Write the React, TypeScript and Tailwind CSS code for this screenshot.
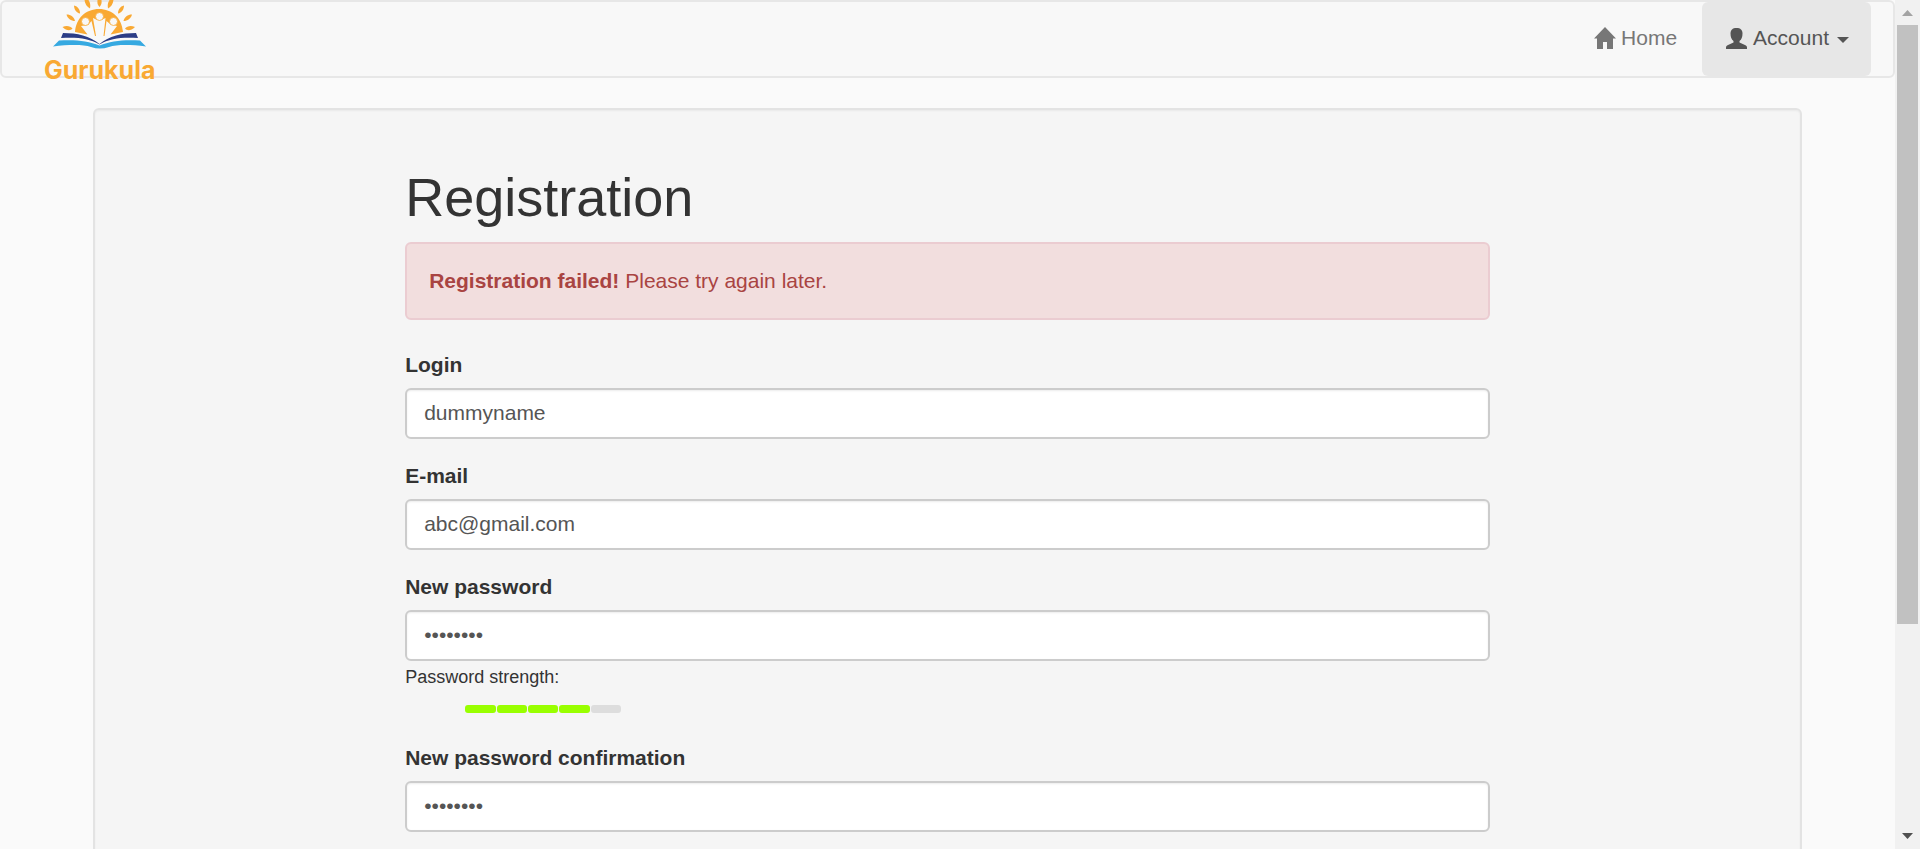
import React, { useState } from "react";

const inputClass =
  "block h-[51px] w-full rounded-md border-2 border-[#ccc] bg-white px-[17px] pb-0.5 text-[21px] leading-[30px] text-[#555] shadow-[inset_0_1px_2px_rgba(0,0,0,0.075)] outline-none focus:border-[#66afe9]";

function Field({
  id,
  label,
  type,
  initial,
  children,
}: {
  id: string;
  label: string;
  type: string;
  initial: string;
  children?: React.ReactNode;
}) {
  const [value, setValue] = useState(initial);
  return (
    <div className="mb-[22px]">
      <label htmlFor={id} className="mb-2 block text-[21px] leading-[30px] font-bold">
        {label}
      </label>
      <input
        id={id}
        type={type}
        value={value}
        onChange={(e) => setValue(e.target.value)}
        className={inputClass}
      />
      {children}
    </div>
  );
}

function PasswordStrength() {
  return (
    <div className="h-[60px] pt-0.5">
      <div className="text-[18px] leading-7">Password strength:</div>
      <div className="mt-[14px] ml-[60px] grid w-[156px] grid-cols-5 gap-px">
        <span className="h-2 rounded-[3px] bg-[#9f0]" />
        <span className="h-2 rounded-[3px] bg-[#9f0]" />
        <span className="h-2 rounded-[3px] bg-[#9f0]" />
        <span className="h-2 rounded-[3px] bg-[#9f0]" />
        <span className="h-2 rounded-[3px] bg-[#ddd]" />
      </div>
    </div>
  );
}

function LogoMark() {
  return (
    <svg viewBox="52 0 94 50" className="h-[50px] w-[94px] shrink-0" aria-hidden="true">
      <g fill="#f9a933">
        <path d="M74 32C75 18 85 9 98 9s23 9 24 23l-12.500 2.500L116 26l-7-2-3.500-3-2 15h-1l2-18Q98 22 92 18l3 18h-1l-3.500-15-3.500 4-7 1 6.500 8.500z" />
        <path d="M61.500 27c4-2 8-1 10 1.500-2 2.500-6 2.500-10-1.500z" />
        <path d="M65.500 14.500c4.500 0 7.500 2.500 8.500 6.500-4 0-7.500-2.500-8.500-6.500z" />
        <path d="M73 5.500c4 1 6 4 6 8-3.500-.5-6-4-6-8z" />
        <path d="M83.500 0h4c2 3 2 5.500 1.500 8.500-3-1.500-5-4.500-5.500-8.500z" />
        <path d="M96.500 0h4c.5 3-.3 5-2 7-1.800-2-2.500-4-2-7z" />
        <path d="M108.500 0h4c-.5 4-2.500 7-5.500 8.500-.5-3-.5-5.500 1.500-8.500z" />
        <path d="M123 5.500c0 4-2.500 7.500-6 8 0-4 2-7 6-8z" />
        <path d="M131 14.500c-1 4-4.500 6.500-8.500 6.500 1-4 4-6.500 8.500-6.500z" />
        <path d="M134 27c-4 4-8 4-10 1.500 2-2.500 6-3.500 10-1.500z" />
      </g>
      <g fill="#f8f8f8" stroke="#f9a933" strokeWidth="0.800">
        <circle cx="84.500" cy="21.500" r="4" />
        <circle cx="98.500" cy="16.500" r="4" />
        <circle cx="112.500" cy="21.500" r="4" />
      </g>
      <path d="M62 33c14 0 27 3 36.500 11C108 36 121 33 135 33l2 5c-15-1-28 0-38.500 6.500C88 38 75 37 60 38z" fill="#2b3c86" />
      <path d="M58 40.500c15-1 29 0 40.500 5 11.500-5 25.500-6 40.500-5l6 6c-16-2-29-2-37 .5-6 2-12 2-18 0-8-2.500-21-2.500-38-.5z" fill="#36a9e1" />
    </svg>
  );
}

function HomeIcon() {
  return (
    <svg viewBox="0 0 22 22" className="h-[22px] w-[22px]" fill="currentColor" aria-hidden="true">
      <path d="M11 0l11 11.500h-3V22h-6v-7H9v7H3V11.500H0z" />
    </svg>
  );
}

function UserIcon() {
  return (
    <svg viewBox="0 0 21 21" className="h-[21px] w-[21px]" fill="currentColor" aria-hidden="true">
      <path d="M10.500 0C14.500 0 16.500 2 16.500 5.500c0 3.500-1 6-3 7.500v1.500l6 2.700c1 .5 1.500 1.200 1.500 2.300V21H0v-1.500c0-1.100.5-1.800 1.500-2.300l6-2.700V13c-2-1.500-3-4-3-7.500C4.500 2 6.500 0 10.500 0z" />
    </svg>
  );
}

export default function App() {
  return (
    <div className="flex h-screen overflow-hidden bg-[#fafafa] font-['Liberation_Sans',Arial,sans-serif] text-[#333]">
      <div className="min-w-0 flex-1 overflow-hidden">
        <nav className="mb-[30px] flex h-[78px] justify-between rounded-md border-2 border-[#e7e7e7] bg-[#f8f8f8] px-[22px]">
          <a href="#" className="-mt-0.5 ml-5 flex flex-col items-center">
            <LogoMark />
            <span className="mt-2 font-['Inter',sans-serif] text-[25px] leading-6 font-bold text-[#f9a933]">
              Gurukula
            </span>
          </a>
          <div className="flex text-[21px] leading-[30px]">
            <a href="#" className="flex items-center gap-[5px] pr-[25px] pb-0.5 pl-[22px] text-[#777]">
              <HomeIcon />
              Home
            </a>
            <button type="button" className="flex items-center gap-1.5 rounded-md bg-[#e7e7e7] pr-[22px] pb-0.5 pl-6 text-[#555]">
              <UserIcon />
              Account
              <svg viewBox="0 0 12 6" className="mt-1 ml-0.5 h-1.5 w-3" fill="currentColor" aria-hidden="true">
                <path d="M0 0h12L6 6z" />
              </svg>
            </button>
          </div>
        </nav>

        <main className="mx-[93px] rounded-md border-2 border-[#e3e3e3] bg-[#f5f5f5] px-1.5 py-7 shadow-[inset_0_1px_2px_rgba(0,0,0,0.05)]">
          <div className="mx-auto w-2/3 px-[22px]">
            <h1 className="mt-[30px] mb-[15px] text-[54px] leading-[59px]">Registration</h1>
            <div
              role="alert"
              className="mb-[30px] rounded-md border-2 border-[#ebccd1] bg-[#f2dede] p-[22px] text-[21px] leading-[30px] text-[#a94442]"
            >
              <strong>Registration failed!</strong> Please try again later.
            </div>
            <form>
              <Field id="login" label="Login" type="text" initial="dummyname" />
              <Field id="email" label="E-mail" type="email" initial="abc@gmail.com" />
              <Field id="password" label="New password" type="password" initial="abcd1234">
                <PasswordStrength />
              </Field>
              <Field id="confirm" label="New password confirmation" type="password" initial="abcd1234" />
            </form>
          </div>
        </main>
      </div>

      <div className="flex w-[25px] shrink-0 flex-col bg-[#f1f1f1] px-0.5" aria-hidden="true">
        <svg viewBox="0 0 21 25" className="h-[25px] w-[21px]" fill="#a3a3a3">
          <path d="M5 16h11l-5.500-6z" />
        </svg>
        <div className="flex-3 bg-[#c1c1c1]" />
        <div className="flex-1" />
        <svg viewBox="0 0 21 25" className="h-[25px] w-[21px]" fill="#505050">
          <path d="M5 9h11l-5.500 6z" />
        </svg>
      </div>
    </div>
  );
}
